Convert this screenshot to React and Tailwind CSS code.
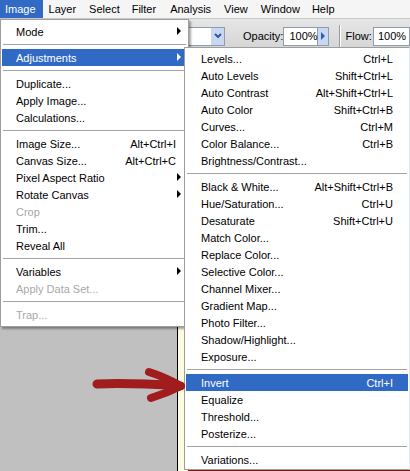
import React from "react";

const imageMenu = [
  { label: "Mode", sub: true },
  "sep",
  { label: "Adjustments", sub: true, active: true },
  "sep",
  { label: "Duplicate..." },
  { label: "Apply Image..." },
  { label: "Calculations..." },
  "sep",
  { label: "Image Size...", keys: "Alt+Ctrl+I" },
  { label: "Canvas Size...", keys: "Alt+Ctrl+C" },
  { label: "Pixel Aspect Ratio", sub: true },
  { label: "Rotate Canvas", sub: true },
  { label: "Crop", disabled: true },
  { label: "Trim..." },
  { label: "Reveal All" },
  "sep",
  { label: "Variables", sub: true },
  { label: "Apply Data Set...", disabled: true },
  "sep",
  { label: "Trap...", disabled: true },
];

const adjustMenu = [
  { label: "Levels...", keys: "Ctrl+L" },
  { label: "Auto Levels", keys: "Shift+Ctrl+L" },
  { label: "Auto Contrast", keys: "Alt+Shift+Ctrl+L" },
  { label: "Auto Color", keys: "Shift+Ctrl+B" },
  { label: "Curves...", keys: "Ctrl+M" },
  { label: "Color Balance...", keys: "Ctrl+B" },
  { label: "Brightness/Contrast..." },
  "sep",
  { label: "Black & White...", keys: "Alt+Shift+Ctrl+B" },
  { label: "Hue/Saturation...", keys: "Ctrl+U" },
  { label: "Desaturate", keys: "Shift+Ctrl+U" },
  { label: "Match Color..." },
  { label: "Replace Color..." },
  { label: "Selective Color..." },
  { label: "Channel Mixer..." },
  { label: "Gradient Map..." },
  { label: "Photo Filter..." },
  { label: "Shadow/Highlight..." },
  { label: "Exposure..." },
  "sep",
  { label: "Invert", keys: "Ctrl+I", active: true },
  { label: "Equalize" },
  { label: "Threshold..." },
  { label: "Posterize..." },
  "sep",
  { label: "Variations..." },
];

const Separator = () => (
  <div className="flex h-[9px] flex-col justify-center px-[1px]">
    <div className="h-px bg-[#a3a3a3]" />
    <div className="h-px bg-white" />
  </div>
);

const MenuRow = ({ item, padLeft, padRight }) => (
  <div
    className={`relative flex h-[17px] items-center justify-between pt-px ${padLeft} ${padRight} ${
      item.active ? "bg-[#316ac5] text-white" : item.disabled ? "text-[#a8a8a8]" : "text-black"
    }`}
  >
    <span className="whitespace-nowrap">{item.label}</span>
    {item.keys && <span className="whitespace-nowrap">{item.keys}</span>}
    {item.sub && (
      <span
        className={`absolute right-[6px] top-[4px] h-0 w-0 border-y-[4px] border-l-[4px] border-y-transparent ${
          item.active ? "border-l-white" : "border-l-black"
        }`}
      />
    )}
  </div>
);

export default function App() {
  return (
    <div className="relative flex h-[471px] w-[410px] flex-col overflow-hidden bg-[#c0c0c0] font-['Liberation_Sans',Arial,sans-serif] text-[11px]">
      {/* menu bar */}
      <div className="flex h-[19px] shrink-0 items-center border-b border-[#c8c8c8] bg-[#f5f5f5] text-black">
        <span className="flex h-full items-center bg-[#316ac5] pr-[7px] pl-[5px] text-white">Image</span>
        <span className="ml-[6px]">Layer</span>
        <span className="ml-[13px]">Select</span>
        <span className="ml-[12px]">Filter</span>
        <span className="ml-[14px]">Analysis</span>
        <span className="ml-[13px]">View</span>
        <span className="ml-[13px]">Window</span>
        <span className="ml-[12px]">Help</span>
      </div>

      {/* options bar */}
      <div className="flex h-[31px] shrink-0 items-center bg-gradient-to-b from-[#e6e6e6] to-[#d4d4d4] pt-[3px] text-black">
        <div className="ml-[150px] flex h-[19px] w-[82px] border border-[#8e9bb0] bg-white">
          <div className="flex-1" />
          <div className="flex w-[13px] items-center justify-center bg-[#c9d8f2]">
            <svg width="8" height="6" viewBox="0 0 8 6">
              <path d="M1 1 L4 4 L7 1" fill="none" stroke="#2d4f9a" strokeWidth="1.8" />
            </svg>
          </div>
        </div>
        <span className="ml-[18px] w-[43px]">Opacity:</span>
        <div className="flex h-[19px] w-[35px] items-center border border-[#8e9bb0] bg-white pl-[5px]">100%</div>
        <div className="flex h-[19px] w-[11px] items-center justify-center border-y border-r border-[#8e9bb0] bg-[#c9d8f2]">
          <span className="h-0 w-0 border-y-[4px] border-l-[4px] border-y-transparent border-l-[#2d5bc0]" />
        </div>
        <div className="ml-[10px] flex h-[22px]">
          <div className="w-px bg-[#9a9a9a]" />
          <div className="w-px bg-white" />
        </div>
        <span className="ml-[5px] w-[30px]">Flow:</span>
        <div className="flex h-[19px] w-[40px] items-center border border-[#8e9bb0] bg-white pl-[4px]">100%</div>
      </div>

      {/* workspace */}
      <div className="flex flex-1">
        <div className="w-[177px] bg-[#c0c0c0]" />
        <div className="w-px bg-black" />
        <div className="flex flex-1 flex-col bg-[#fdfbe0]">
          <div className="flex-1" />
          <div className="ml-[10px] h-[2px] bg-[#7a1818]" />
        </div>
      </div>

      {/* Image menu */}
      <div className="absolute top-[19px] left-0 w-[189px] border border-[#9d9d9d] bg-white px-[1px] pt-[3px] pb-[3px] shadow-[2px_2px_2px_rgba(0,0,0,0.35)]">
        {imageMenu.map((item, i) =>
          item === "sep" ? (
            <Separator key={i} />
          ) : (
            <MenuRow key={i} item={item} padLeft="pl-[14px]" padRight="pr-[11px]" />
          ),
        )}
      </div>

      {/* Adjustments submenu */}
      <div className="absolute top-[47px] left-[184px] w-[226px] border border-[#9d9d9d] border-r-[#dfe8f7] bg-white px-[1px] pt-[2px] pb-[1px]">
        {adjustMenu.map((item, i) =>
          item === "sep" ? (
            <Separator key={i} />
          ) : (
            <MenuRow key={i} item={item} padLeft="pl-[15px]" padRight="pr-[15px]" />
          ),
        )}
      </div>

      {/* red arrow */}
      <svg className="pointer-events-none absolute top-0 left-0" width="410" height="471">
        <g fill="none" stroke="#a11c1c" strokeLinecap="round" strokeLinejoin="round">
          <path d="M97 384 C120 383 150 384 179 386" strokeWidth="9" />
          <path d="M149 372 C162 376 172 381 181 386" strokeWidth="8" />
          <path d="M181 386 C171 391 161 395 151 398" strokeWidth="8" />
        </g>
      </svg>
    </div>
  );
}
